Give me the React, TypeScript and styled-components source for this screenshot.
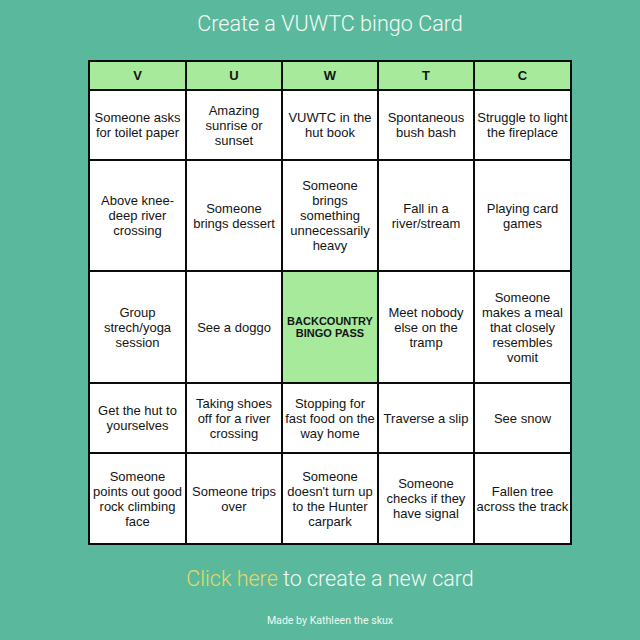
import React from "react";
import styled, { createGlobalStyle } from "styled-components";

const Global = createGlobalStyle`
  html, body { margin: 0; padding: 0; background: #5ab99c; }
  body { font-family: Roboto, "Liberation Sans", sans-serif; }
`;

const Page = styled.div`
  width: 640px;
  height: 640px;
  box-sizing: border-box;
  padding-left: 20px;
  display: flex;
  flex-direction: column;
  align-items: center;
`;

const Title = styled.h1`
  margin: 10px 0 22px;
  font-family: Roboto, sans-serif;
  font-weight: 300;
  font-size: 21.6px;
  line-height: 28px;
  color: #f3fbf6;
`;

const Board = styled.div`
  display: grid;
  grid-template-columns: 95px 94px 94px 94px 95px;
  grid-template-rows: 27px 68px 109px 110px 68px 89px;
  gap: 2px;
  padding: 2px;
  background: #0b0b0b;
`;

const Cell = styled.div<{ $green?: boolean }>`
  background: ${(p) => (p.$green ? "#a7ea9c" : "#ffffff")};
  display: flex;
  align-items: center;
  justify-content: center;
  text-align: center;
  padding: 0 1px;
  font-family: "Liberation Sans", Arial, sans-serif;
  font-size: 13px;
  line-height: 15px;
  color: #141414;
`;

const HeadCell = styled(Cell)`
  font-weight: bold;
`;

const FreeCell = styled(Cell)`
  font-weight: bold;
  font-size: 11px;
  line-height: 12px;
`;

const Action = styled.p`
  margin: 21px 0 0;
  font-family: Roboto, sans-serif;
  font-weight: 300;
  font-size: 21.5px;
  line-height: 26px;
  color: #f3fbf6;
`;

const Link = styled.a`
  color: #e6d76a;
  text-decoration: none;
`;

const Credit = styled.p`
  margin: 22px 0 0;
  font-family: Roboto, sans-serif;
  font-weight: 400;
  font-size: 10.6px;
  line-height: 14px;
  color: #eef8f2;
`;

const letters = ["V", "U", "W", "T", "C"];
const cells = [
  "Someone asks for toilet paper",
  "Amazing sunrise or sunset",
  "VUWTC in the hut book",
  "Spontaneous bush bash",
  "Struggle to light the fireplace",
  "Above knee-deep river crossing",
  "Someone brings dessert",
  "Someone brings something unnecessarily heavy",
  "Fall in a river/stream",
  "Playing card games",
  "Group strech/yoga session",
  "See a doggo",
  "FREE",
  "Meet nobody else on the tramp",
  "Someone makes a meal that closely resembles vomit",
  "Get the hut to yourselves",
  "Taking shoes off for a river crossing",
  "Stopping for fast food on the way home",
  "Traverse a slip",
  "See snow",
  "Someone points out good rock climbing face",
  "Someone trips over",
  "Someone doesn't turn up to the Hunter carpark",
  "Someone checks if they have signal",
  "Fallen tree across the track",
];

export default function App() {
  return (
    <Page>
      <Global />
      <Title>Create a VUWTC bingo Card</Title>
      <Board>
        {letters.map((l) => (
          <HeadCell key={l} $green>
            {l}
          </HeadCell>
        ))}
        {cells.map((c, i) =>
          c === "FREE" ? (
            <FreeCell key={i} $green>
              BACKCOUNTRY
              <br />
              BINGO PASS
            </FreeCell>
          ) : (
            <Cell key={i}>{c}</Cell>
          )
        )}
      </Board>
      <Action>
        <Link href="#">Click here</Link> to create a new card
      </Action>
      <Credit>Made by Kathleen the skux</Credit>
    </Page>
  );
}
